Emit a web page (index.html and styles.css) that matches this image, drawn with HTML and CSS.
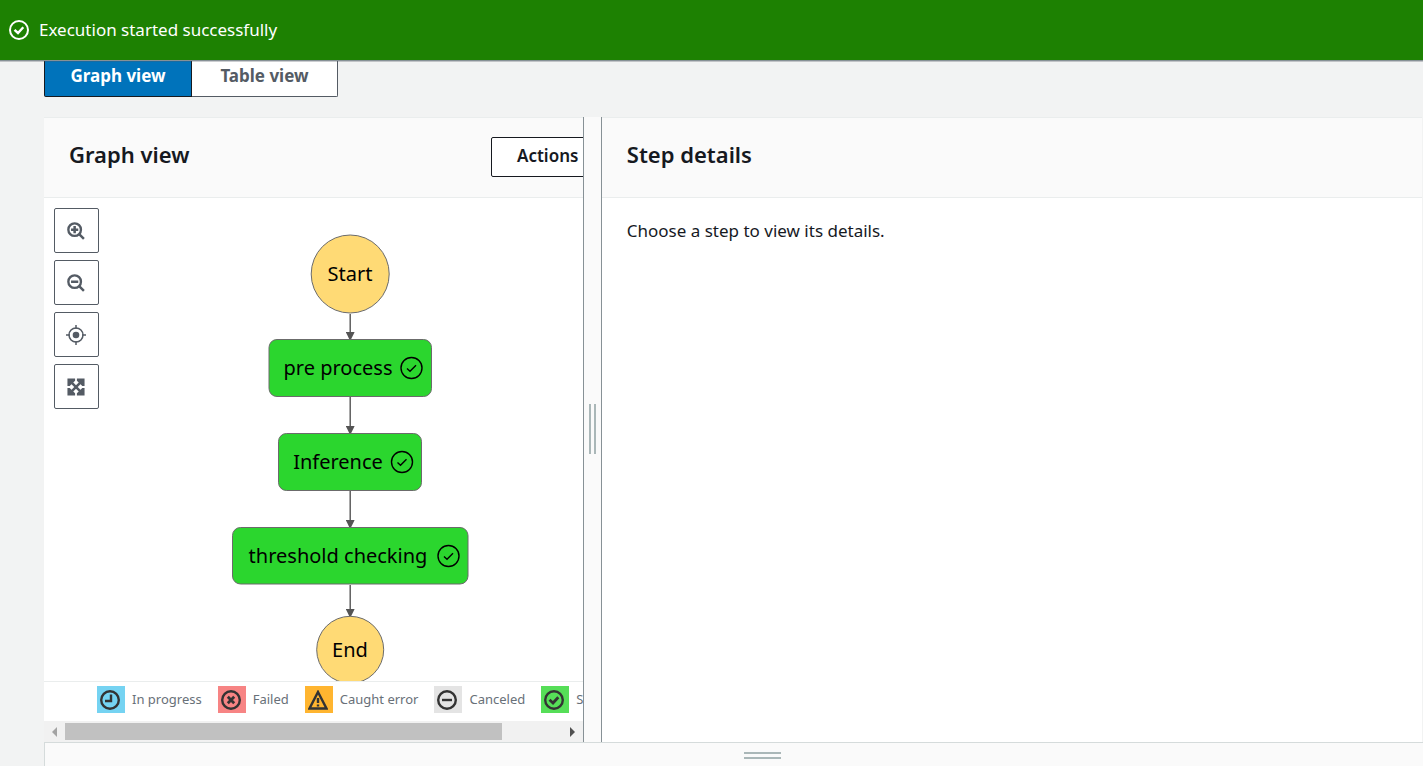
FILE: index.html
```html
<!DOCTYPE html>
<html lang="en">
<head>
<meta charset="utf-8">
<title>Execution - Graph view</title>
<link rel="stylesheet" href="styles.css">
</head>
<body>
<svg class="defs" aria-hidden="true">
  <defs>
    <marker id="arrow" viewBox="0 0 10 10" refX="9" refY="5" markerWidth="9" markerHeight="9" markerUnits="userSpaceOnUse" orient="auto"><path d="M0 0L10 5L0 10Z" fill="#545454"/></marker>
    <g id="node-check"><circle r="10.5" fill="none" stroke="#000" stroke-width="1.4"/><path d="M-4.5 0.5L-1.5 3.2L4.5 -2.8" fill="none" stroke="#000" stroke-width="1.4"/></g>
  </defs>
</svg>
<div class="flash" role="status">
  <svg class="flash-icon" viewBox="0 0 20 20" fill="none" stroke="#fff" stroke-width="2"><circle cx="10" cy="10" r="9"/><path d="M5.5 9.8L9 13L14.3 7.2" stroke-width="2.4"/></svg>
  <span>Execution started successfully</span>
</div>
<main class="page">
  <div class="tabs">
    <button class="tab tab-active" type="button">Graph view</button>
    <button class="tab" type="button">Table view</button>
  </div>
  <div class="split">
    <section class="graph-panel">
      <div class="graph-content">
        <header class="panel-header">
          <h2>Graph view</h2>
          <button class="actions" type="button">Actions <span class="caret"></span></button>
        </header>
        <div class="canvas">
          <svg class="graph" width="612" height="484" viewBox="0 0 612 484">
            <g stroke="#545454" stroke-width="1.4">
              <path d="M306.200 116V142" marker-end="url(#arrow)"/>
              <path d="M306.200 199V236" marker-end="url(#arrow)"/>
              <path d="M306.200 293V330" marker-end="url(#arrow)"/>
              <path d="M306.200 387V419" marker-end="url(#arrow)"/>
            </g>
            <g stroke="#6b6b6b" stroke-width="1">
              <circle cx="306.200" cy="76" r="39" fill="#ffda75"/>
              <rect x="225" y="141.500" width="162.500" height="57" rx="8" fill="#2bd62e"/>
              <rect x="234.500" y="235.500" width="143" height="57" rx="8" fill="#2bd62e"/>
              <rect x="188.500" y="329.500" width="235.500" height="56.500" rx="8" fill="#2bd62e"/>
              <circle cx="306.200" cy="451.800" r="33.500" fill="#ffda75"/>
            </g>
            <g class="node-text">
              <text x="306" y="83" text-anchor="middle">Start</text>
              <text x="294" y="177" text-anchor="middle">pre process</text>
              <text x="294" y="271" text-anchor="middle">Inference</text>
              <text x="294" y="365" text-anchor="middle">threshold checking</text>
              <text x="306" y="459" text-anchor="middle">End</text>
            </g>
            <use href="#node-check" x="367.500" y="170"/>
            <use href="#node-check" x="358" y="264"/>
            <use href="#node-check" x="404.500" y="358"/>
          </svg>
          <div class="tools">
            <button type="button" aria-label="Zoom in"><svg viewBox="0 0 20 20" fill="none" stroke="#545b64"><circle cx="8.500" cy="8.500" r="7" stroke-width="2.600"/><path d="M13.500 13.500L18.800 18.800M8.500 4.500V12.500M4.500 8.500H12.500" stroke-width="2.800"/></svg></button>
            <button type="button" aria-label="Zoom out"><svg viewBox="0 0 20 20" fill="none" stroke="#545b64"><circle cx="8.500" cy="8.500" r="7" stroke-width="2.600"/><path d="M13.500 13.500L18.800 18.800M4.500 8.500H12.500" stroke-width="2.800"/></svg></button>
            <button type="button" aria-label="Center"><svg class="wide" viewBox="0 0 20 20" fill="none" stroke="#545b64" stroke-width="1.500"><circle cx="10" cy="10" r="7"/><circle cx="10" cy="10" r="3.300" fill="#545b64" stroke="none"/><path d="M10 0V4M10 16V20M0 10H4M16 10H20"/></svg></button>
            <button type="button" aria-label="Fit to view"><svg viewBox="0 0 20 20"><path d="M3 3L17 17M17 3L3 17" stroke="#545b64" stroke-width="2.800"/><path d="M0.500 0.500H9V3L3 9H0.500ZM19.500 0.500H11V3L17 9H19.500ZM0.500 19.500V11H3L9 17V19.500ZM19.500 19.500H11V17L17 11H19.500Z" fill="#545b64"/></svg></button>
          </div>
        </div>
        <ul class="legend">
          <li><span class="swatch in-progress"><svg viewBox="0 0 20 20"><circle cx="10" cy="10" r="8.800"/><path d="M11 4.500V11H5"/></svg></span>In progress</li>
          <li><span class="swatch failed"><svg viewBox="0 0 20 20"><circle cx="10" cy="10" r="8.800"/><path d="M6.800 6.800L13.200 13.200M13.200 6.800L6.800 13.200" stroke-width="2.800"/></svg></span>Failed</li>
          <li><span class="swatch caught"><svg viewBox="0 0 20 20"><path d="M10 2L18.500 18.500H1.500ZM10 8V13M10 14.500V16.500"/></svg></span>Caught error</li>
          <li><span class="swatch canceled"><svg viewBox="0 0 20 20"><circle cx="10" cy="10" r="8.800"/><path d="M5 10H15"/></svg></span>Canceled</li>
          <li><span class="swatch succeeded"><svg viewBox="0 0 20 20"><circle cx="10" cy="10" r="8.800"/><path d="M5.500 9.800L9 13L14.300 7.200" stroke-width="2.800"/></svg></span>Succeeded</li>
        </ul>
      </div>
      <div class="scrollbar" aria-hidden="true"><span class="arrow-left"></span><span class="track"><span class="thumb"></span></span><span class="arrow-right"></span></div>
    </section>
    <div class="gutter"><span class="grip"></span></div>
    <section class="details-panel">
      <header class="panel-header"><h2>Step details</h2></header>
      <p>Choose a step to view its details.</p>
    </section>
  </div>
  <div class="drawer"><span class="drawer-grip"></span></div>
</main>
</body>
</html>
```
FILE: styles.css
```css
* { box-sizing: border-box; }
body {
  margin: 0;
  height: 100vh;
  display: flex;
  flex-direction: column;
  overflow: hidden;
  background: #f2f3f3;
  color: #16191f;
  font-family: "Noto Sans", "Open Sans", sans-serif;
  font-size: 17px;
}
.defs { position: absolute; width: 0; height: 0; }
button { font-family: inherit; cursor: pointer; }
.flash {
  flex: none;
  height: 61px;
  padding: 0 9px 1px;
  display: flex;
  align-items: center;
  gap: 10px;
  background: #1d8102;
  border-bottom: 1px solid #879196;
  box-shadow: 0 1px 0 rgba(84, 91, 100, 0.3);
  position: relative;
  color: #fff;
  line-height: 22px;
}
.flash-icon { width: 20px; height: 20px; }
.page {
  flex: 1;
  min-height: 0;
  padding-left: 44px;
  display: flex;
  flex-direction: column;
}
.tabs { display: flex; margin-bottom: 20px; }
.tab {
  height: 36px;
  width: 146px;
  padding: 0 0 6px;
  border: 1px solid #545b64;
  border-top: 0;
  border-left: 0;
  border-radius: 0 0 2px 0;
  background: #fff;
  color: #545b64;
  font-size: 17px;
  font-weight: 700;
}
.tab-active {
  width: 148px;
  border: 1px solid #16191f;
  border-top: 0;
  border-radius: 0 0 0 2px;
  background: #0073bb;
  color: #fff;
}
.split { flex: 1; min-height: 0; display: flex; padding-right: 1px; }
.graph-panel {
  flex: none;
  width: 39.1%;
  display: flex;
  flex-direction: column;
  overflow: hidden;
  background: #fff;
}
.graph-content {
  flex: 1;
  min-height: 0;
  width: 626px;
  display: flex;
  flex-direction: column;
}
.panel-header {
  flex: none;
  height: 81px;
  padding: 19px 25px 0;
  display: flex;
  align-items: flex-start;
  justify-content: space-between;
  background: #fafafa;
  border-top: 1px solid #eaeded;
  border-bottom: 1px solid #eaeded;
}
h2 { margin: 0; font-size: 22px; line-height: 34px; font-weight: 600; }
.actions {
  height: 40px;
  width: 154px;
  padding: 0 25px 3px;
  display: flex;
  align-items: center;
  gap: 12px;
  border: 1px solid #16191f;
  border-radius: 2px;
  background: #fff;
  color: #16191f;
  font-size: 17px;
  font-weight: 600;
}
.caret { border: 5px solid transparent; border-top-color: #16191f; border-bottom: 0; }
.canvas { position: relative; flex: 1; min-height: 0; overflow: hidden; }
.graph { display: block; }
.node-text { font-size: 20px; fill: #000; }
.tools {
  position: absolute;
  top: 10px;
  left: 10px;
  display: flex;
  flex-direction: column;
  gap: 7px;
}
.tools button {
  width: 45px;
  height: 45px;
  padding: 0 1px 0 0;
  display: flex;
  align-items: center;
  justify-content: center;
  border: 1px solid #545b64;
  border-radius: 2px;
  background: #fff;
}
.tools svg { width: 18px; height: 18px; }
.tools .wide { width: 20px; height: 20px; }
.legend {
  flex: none;
  height: 40px;
  margin: 0;
  padding: 4px 0 0 53px;
  display: flex;
  gap: 16px;
  list-style: none;
  border-top: 1px solid #eaeded;
  color: #687078;
  font-size: 13px;
  line-height: 26px;
}
.legend li { display: flex; gap: 7px; white-space: nowrap; }
.swatch {
  width: 28px;
  height: 27px;
  padding-right: 2px;
  display: flex;
  align-items: center;
  justify-content: center;
}
.swatch svg { width: 20px; height: 20px; fill: none; stroke: #333; stroke-width: 2.4; }
.in-progress { background: #75d3f2; }
.failed { background: #f78484; }
.caught { background: #ffb530; }
.canceled { background: #e4e4e4; }
.succeeded { background: #56de58; }
.scrollbar {
  flex: none;
  height: 21px;
  padding: 0 8px;
  display: flex;
  align-items: center;
  gap: 8px;
  background: #f1f1f1;
}
.arrow-left { border: 5px solid transparent; border-right: 5px solid #a3a3a3; border-left: 0; }
.arrow-right { border: 5px solid transparent; border-left: 5px solid #505050; border-right: 0; }
.track { flex: 1; }
.thumb { display: block; width: 88%; height: 17px; background: #c1c1c1; }
.gutter {
  flex: none;
  width: 19px;
  padding-bottom: 2px;
  display: flex;
  align-items: center;
  justify-content: center;
  background: #fafafa;
  border-left: 1px solid #879196;
  border-right: 1px solid #879196;
}
.grip { width: 7px; height: 50px; border: 2px solid #aab7b8; border-top: 0; border-bottom: 0; }
.details-panel { flex: 1; min-width: 0; background: #fff; }
.details-panel p { margin: 0; padding: 21px 25px; line-height: 24px; }
.drawer {
  flex: none;
  height: 24px;
  padding: 2px 0 0 57px;
  display: flex;
  align-items: center;
  justify-content: center;
  background: #fafafa;
  border-top: 1px solid #d5dbdb;
  border-left: 1px solid #d5dbdb;
}
.drawer-grip { width: 37px; height: 7px; border: 2px solid #aab7b8; border-left: 0; border-right: 0; }
```
